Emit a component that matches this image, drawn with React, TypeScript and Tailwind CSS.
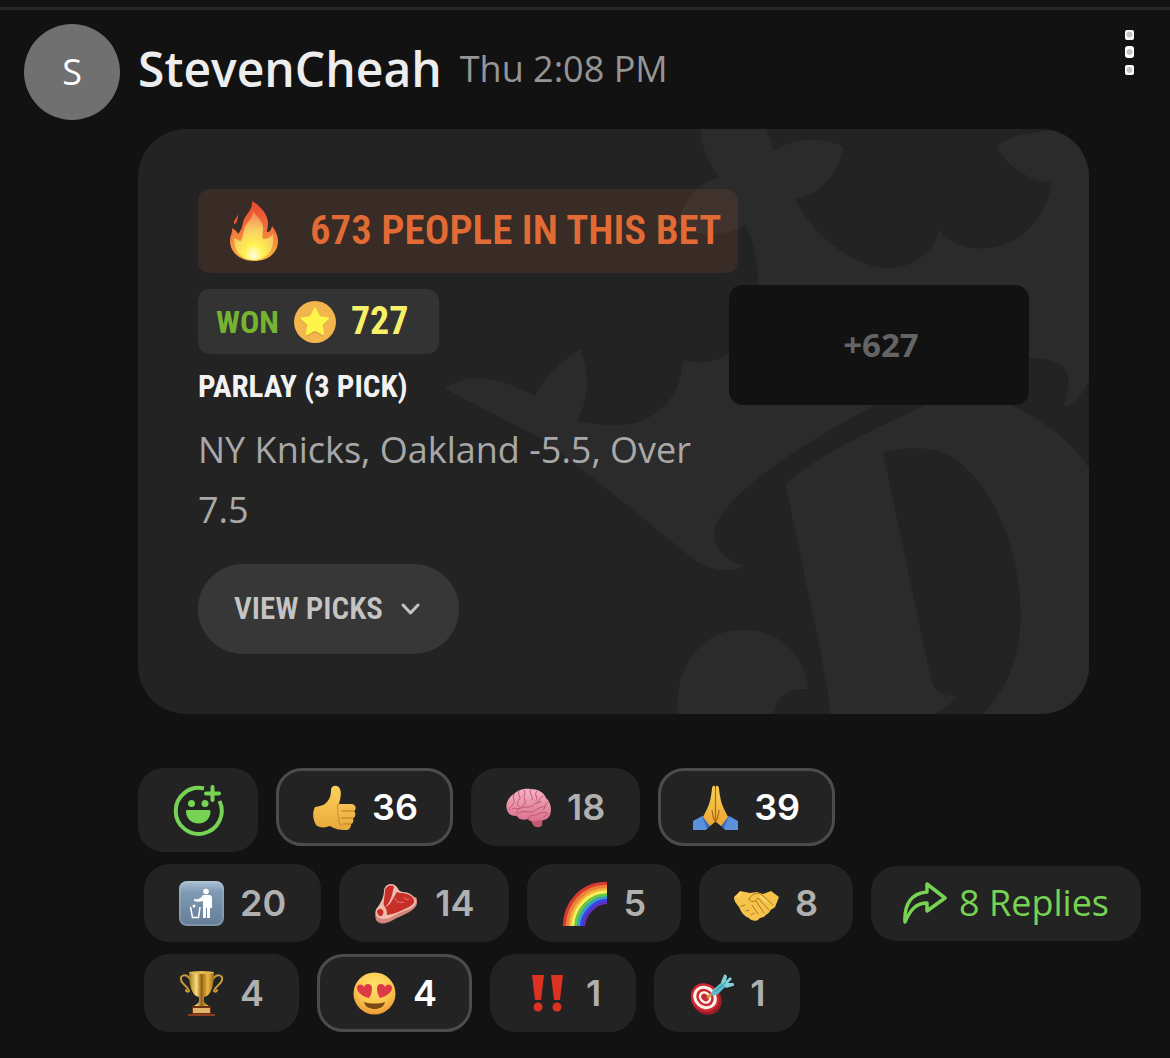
import type { ReactNode } from 'react'

interface Reaction {
  name: string
  icon: ReactNode
  count: number
  active?: boolean
}

const Flame = () => (
  <svg className="h-[60px] w-12 shrink-0" viewBox="0 0 48 60" aria-hidden="true">
    <defs>
      <linearGradient id="flame" x1="0" y1="0" x2="0" y2="1">
        <stop offset="0" stopColor="#e8482f" />
        <stop offset="0.45" stopColor="#f0703c" />
        <stop offset="0.75" stopColor="#f6973c" />
        <stop offset="1" stopColor="#f9b93f" />
      </linearGradient>
      <radialGradient id="flameCore" cx="0.5" cy="0.9" r="0.8">
        <stop offset="0" stopColor="#fffde0" />
        <stop offset="0.3" stopColor="#fff04f" />
        <stop offset="0.65" stopColor="#fbcf63" />
        <stop offset="1" stopColor="#f3985a" />
      </radialGradient>
    </defs>
    <path fill="url(#flame)" d="M22 0c9 5 16 14 16 22 0 4-1 7-1 9 3 0 4-2 5-6 4 5 6 10 6 15 0 12-10 20-24 20S0 51 0 40c0-6 3-9 2-13 3 2 5 3 6 6 3-3 4-7 5-11 1-8 10-12 9-22z" />
    <path fill="#e2573a" d="M8 13c-1 4-5 6-4 10 3 0 4-5 4-10z" />
    <path fill="url(#flameCore)" d="M23 11c6 6 11 12 10 18 0 3-1 6 0 9 4 0 8-2 10-5 2 14-5 26-19 26S4 49 4 37c3 1 5 3 7 3 2-4 2-9 4-14 2-5 8-9 8-15z" />
  </svg>
)

const Coin = () => (
  <svg className="size-[42px]" viewBox="0 0 42 42" aria-hidden="true">
    <circle cx="21" cy="21" r="21" fill="#f3b64d" />
    <path fill="#c98a2b" opacity="0.5" strokeLinejoin="round" d="M21 8l4.400 8.400 9.400 1.700-6.600 6.900 1.200 9.500-8.400-4-8.400 4 1.200-9.500-6.600-6.900 9.400-1.700z" transform="translate(0 1)" />
    <path fill="#fdf54a" stroke="#fdf54a" strokeWidth="2" strokeLinejoin="round" d="M21 7.500l4.200 8.500 9 1.400-6.500 6.500 1.400 9.100-8.100-4.300-8.100 4.300 1.400-9.100-6.500-6.500 9-1.400z" />
  </svg>
)

const ThumbsUp = () => (
  <svg className="size-[45px]" viewBox="0 0 45 45">
    <defs>
      <linearGradient id="hand" x1="0" y1="0" x2="0" y2="1">
        <stop offset="0" stopColor="#fcd15c" />
        <stop offset="1" stopColor="#e9a93c" />
      </linearGradient>
    </defs>
    <path fill="url(#hand)" d="M4 22c4-1 8-1 11-4 4-4 5-8 5-13 0-5 7-6 9-1 2 5 0 10-1 15h12c5 0 6 5 3 7 2 2 2 6-1 7 1 3 0 6-2 6 0 4-2 6-5 6-7 0-11-1-16-4-5 2-11 2-14-1-3-5-4-12-1-18z" />
    <g fill="none" stroke="#b97b26" strokeWidth="1.200" strokeLinecap="round">
      <path d="M42 26H31M41 33H31M39 39h-7" />
      <path d="M28 19c-2 2-2 4-1 7-1 3 0 5 1 7-1 3 0 5 2 8" opacity="0.6" />
    </g>
  </svg>
)

const Brain = () => (
  <svg className="size-[45px]" viewBox="0 0 45 45">
    <defs>
      <linearGradient id="brain" x1="0" y1="0" x2="0" y2="1">
        <stop offset="0" stopColor="#f5b3c3" />
        <stop offset="1" stopColor="#d9708c" />
      </linearGradient>
    </defs>
    <path fill="#c0596b" d="M24 33l3 7c2 3 8 3 9 0l1-8z" />
    <path fill="url(#brain)" d="M2 27C-2 21 2 12 8 9c4-5 12-6 17-5 8 0 13 4 15 9 5 4 6 12 4 17-2 5-8 6-12 5-5 3-9 1-10-1-5 2-10 0-11-3-4 0-8-1-9-4z" />
    <g fill="none" stroke="#bd5875" strokeWidth="1" strokeLinecap="round">
      <path d="M8 9c-2 5 2 6-1 10-1 3-4 3-4 6M13 6c-2 4 3 6 0 9-2 2-2 5 0 7M18 5c3 4-2 6 1 10 1 3 0 5-3 6M25 4c-3 5 3 6 1 11M31 6c-4 4 2 6-1 10M37 11c-4 1-3 6-6 8" />
      <path d="M11 31c-2-8 5-9 11-9 6 0 7-6 13-5M13 28c6-4 10 1 15-2 4-2 6-5 11-4M22 34c1-5 7-3 10-5 3-2 6-2 9-1M42 17c-4 2-2 6-5 8M6 24c3-3 5 2 8-1M38 32c1-2 3-2 4-3" />
    </g>
  </svg>
)

const Pray = () => (
  <svg className="size-[45px]" viewBox="0 0 45 45">
    <defs>
      <linearGradient id="palm" x1="0" y1="0" x2="0" y2="1">
        <stop offset="0" stopColor="#f7cf55" />
        <stop offset="1" stopColor="#eea72f" />
      </linearGradient>
    </defs>
    <path fill="#5a90dc" d="M0 36l9-5 8 9-4 5H0zM45 36l-9-5-8 9 4 5h13z" />
    <path fill="#3b6ebb" d="M9 31l3 1 6 8-4 4zM36 31l-3 1-6 8 4 4z" />
    <path fill="url(#palm)" d="M22 1c-2-1-3 1-3 3-1 8-2 14-5 20l-4 8 7 9 5-4z" />
    <path fill="url(#palm)" d="M23 1c2-1 3 1 3 3 1 8 2 14 5 20l4 8-7 9-5-4z" />
    <path fill="none" stroke="#a86919" strokeWidth="1.200" d="M22.500 2v35M19 25c1 5 1 9 3 11M26 25c-1 5-1 9-3 11" />
  </svg>
)

const Litter = () => (
  <svg className="size-[45px]" viewBox="0 0 45 45">
    <defs>
      <linearGradient id="sign" x1="0" y1="0" x2="0" y2="1">
        <stop offset="0" stopColor="#aac0d4" />
        <stop offset="0.25" stopColor="#7f9ab3" />
        <stop offset="1" stopColor="#647d97" />
      </linearGradient>
    </defs>
    <rect width="45" height="45" rx="8" fill="url(#sign)" />
    <rect x="1" y="1" width="43" height="43" rx="7" fill="none" stroke="#c2d2df" strokeOpacity="0.25" strokeWidth="2" />
    <g fill="#fff">
      <circle cx="27" cy="10.500" r="2.800" />
      <path d="M24 14h6c2 0 3 1 3 3v10h-2v10h-3V27h-1v10h-3V20c-3 1-6 1-9 0v-2c4 1 6 0 9-4z" />
      <circle cx="15" cy="25" r="1.500" />
    </g>
    <path fill="none" stroke="#fff" strokeWidth="1.500" d="M11.500 26l2 10.500h6l1.500-10.500" />
  </svg>
)

const Steak = () => (
  <svg className="size-[45px]" viewBox="0 0 45 45">
    <path fill="#d3877a" d="M2 28c-1 4-1 8 0 11 3 5 10 4 17 0 9-5 18-7 23-14 2-3 1-7 0-9z" />
    <path fill="#eebcae" d="M10 9c1-6 8-8 12-4 2 2 3 6 7 6 6 0 12 4 13 9 0 5-5 8-12 10-9 3-14 9-22 8-6-1-8-6-5-11 3-4 7-10 7-18z" />
    <path fill="#c82f28" d="M11 9c1-4 7-6 9-3-2 6-2 14-9 20-3-2 0-9 0-17z" />
    <path fill="#c82f28" d="M23 11c4 2 9 0 14 4 5 4 4 8-2 11-8 4-15 7-22 8 0-5-1-6-2-8 6-2 8-9 12-15z" />
    <path fill="#c82f28" d="M3 30c3-4 8-1 6 3-1 4-6 2-6-3z" />
    <path fill="none" stroke="#e57d72" strokeWidth="1" d="M21 17c0 4 5 5 9 4M31 16c-1 2 1 3 4 2" />
  </svg>
)

const Rainbow = () => (
  <svg className="size-[45px]" viewBox="0 0 45 45">
    <g fill="none" strokeWidth="3.400">
      <path stroke="#d83a32" d="M2.500 45C3 22 19 2.500 45 2.500" />
      <path stroke="#ef8136" d="M5.500 45C6 24 21 5.500 45 5.500" />
      <path stroke="#f5b13e" d="M8.500 45C9 26 23 8.500 45 8.500" />
      <path stroke="#f7ee5c" d="M11 45C11.500 28 25 11 45 11" />
      <path stroke="#63c748" d="M14 45C14.500 30 27 14 45 14" />
      <path stroke="#3b9fd0" d="M17 45C17.500 32 29 17 45 17" />
      <path stroke="#3d43e0" d="M19.500 45C20 34 31 19.500 45 19.500" />
      <path stroke="#6b2bbd" strokeWidth="2" d="M22 45C22.500 36 32 22 45 22" />
    </g>
  </svg>
)

const Handshake = () => (
  <svg className="size-[45px]" viewBox="0 0 45 45">
    <path fill="#f6c44b" d="M0 16L6 10l10 2 7-1 6 2 8-3 8 6-4 10c-2 2-4 2-5 4-1 3-4 3-5 5-2 2-5 1-6 3-2 3-8 2-10-1-5-2-8-6-10-11-2-3-5-5-5-10z" />
    <g fill="none" stroke="#b0761f" strokeWidth="1" strokeLinecap="round">
      <path d="M15 18c2-4 7-7 12-5l12 11M15 18c1 4 7 3 9-1l11 12M22 20l8 12M18 24l6 9" />
      <path d="M7 25l4-1M12 30l3-1M17 34l3-2" />
    </g>
    <path fill="none" stroke="#fde07a" strokeWidth="1.500" d="M3 16l4-4M26 15l7 6" />
  </svg>
)

const Trophy = () => (
  <svg className="size-[45px]" viewBox="0 0 45 45">
    <defs>
      <linearGradient id="cup">
        <stop offset="0" stopColor="#a7751c" />
        <stop offset="0.3" stopColor="#f8dc79" />
        <stop offset="0.5" stopColor="#936015" />
        <stop offset="0.75" stopColor="#e9ba43" />
        <stop offset="1" stopColor="#9b691b" />
      </linearGradient>
    </defs>
    <g fill="none" stroke="#c99b3b" strokeWidth="2" strokeLinecap="round">
      <path d="M11 8C7 2 1 4 2 9c1 5 7 6 8 11-1 1-3 1-3-1" />
      <path d="M34 8c4-6 10-4 9 1-1 5-7 6-8 11 1 1 3 1 3-1" />
    </g>
    <path fill="url(#cup)" d="M10 1h25c0 14-3 24-10 25v4c0 3 5 4 6 6H14c1-2 6-3 6-6v-4C13 25 10 15 10 1z" />
    <ellipse cx="22.500" cy="1.500" rx="12.500" ry="1.500" fill="#e5bb50" />
    <path fill="#6e3015" d="M13 35h19v8H13z" />
    <path fill="#8a3f20" d="M9 43h27v2H9z" />
    <path fill="#e2b56b" d="M14 37h17v5H14z" />
  </svg>
)

const HeartEyes = () => (
  <svg className="size-[45px]" viewBox="0 0 45 45">
    <defs>
      <radialGradient id="face" cx="0.5" cy="0.3" r="0.7">
        <stop offset="0" stopColor="#fee16b" />
        <stop offset="0.6" stopColor="#fbc84f" />
        <stop offset="1" stopColor="#ec9a36" />
      </radialGradient>
    </defs>
    <circle cx="22.500" cy="22.500" r="21" fill="url(#face)" />
    <path fill="#dd3946" d="M17 27C12 26 5 22 5 17c0-4 5-5 7-1 2-5 8-3 8 1 0 4-1 7-3 10z" />
    <path fill="#dd3946" d="M28 27c5-1 12-5 12-10 0-4-5-5-7-1-2-5-8-3-8 1 0 4 1 7 3 10z" />
    <path fill="#7a4a12" d="M12 31c6 2 15 2 21 0-1 5-6 7-10 7-5 0-10-2-11-7z" />
  </svg>
)

const DoubleBang = () => (
  <svg className="size-[45px]" viewBox="0 0 45 45">
    <g fill="#dc3222">
      <path d="M7 4h12l-3 25h-6zM26 4h12l-3 25h-6z" />
      <circle cx="13" cy="36" r="4.500" />
      <circle cx="32" cy="36" r="4.500" />
    </g>
  </svg>
)

const Dart = () => (
  <svg className="size-[45px]" viewBox="0 0 45 45">
    <ellipse cx="17.500" cy="28.500" rx="14.500" ry="16" fill="#9f1c27" transform="rotate(-45 17.500 28.500)" />
    <g transform="rotate(-45 16 26.500)" fill="none">
      <ellipse cx="16" cy="26.500" rx="13.500" ry="15" fill="#cb2a33" />
      <ellipse cx="16" cy="26.500" rx="9.500" ry="11" stroke="#fff4ea" strokeWidth="3" />
      <ellipse cx="16" cy="26.500" rx="4.500" ry="5.500" stroke="#fff4ea" strokeWidth="2.500" />
    </g>
    <path stroke="#c59a3a" strokeWidth="2.500" d="M18 27l6-5" />
    <path fill="#5fbccb" d="M23 24c-1-3 0-5 3-7l7-6 4 4-7 7c-2 2-4 3-7 2z" />
    <path fill="#7fd0d8" d="M32 11l3-7c1-1 3 0 3 2l-1 4 4-4 2 2-4 4 5 0c2 1 1 3 0 3l-7 2z" />
    <path stroke="#2f8593" strokeWidth="1" d="M26 21l11-10" />
  </svg>
)

const AddReaction = () => (
  <svg className="size-[51px]" viewBox="0 0 51 51" fill="none" stroke="#77d353" strokeWidth="4" strokeLinecap="round" aria-hidden="true">
    <path d="M31 3.500A23 23 0 1 0 46.500 16" strokeLinecap="butt" />
    <path d="M39.500 2v13M33 8.500h13" strokeWidth="4" />
    <circle cx="18.500" cy="18.500" r="3.500" fill="#77d353" stroke="none" />
    <circle cx="32" cy="18.500" r="3.500" fill="#77d353" stroke="none" />
    <path d="M14.500 25h21c1.500 0 2 .5 2 2-.5 7-5.500 11.500-12 11.500s-12-4.500-12.500-11.500c0-1.500 0-2 1.500-2z" fill="#77d353" stroke="none" />
  </svg>
)

// Faded crown logo behind the bet card
const Watermark = () => (
  <svg className="pointer-events-none absolute top-0 right-0 h-[585px] w-[659px]" viewBox="0 0 659 585" aria-hidden="true">
    <g transform="matrix(.4273 0 0 .3827 0 -9)" fill="#2b2b2b">
      <path d="M632 20C635 70 650 110 678 150C625 165 595 205 580 268C625 312 690 308 738 272C760 330 768 370 768 430C765 520 740 580 700 610C670 635 625 637 592 628C590 720 530 800 430 798C390 796 365 792 345 785C375 720 372 660 352 598C300 635 265 680 245 722C180 680 90 650 35 703L265 835L345 905C440 985 540 1080 620 1150C660 1185 735 1180 735 1162C690 1155 665 1110 664 1087C664 1000 830 870 1043 745C1200 660 1320 615 1402 622C1470 625 1495 640 1495 690C1493 720 1482 735 1486 748C1510 745 1538 700 1545 670V20C1460 25 1370 30 1325 68C1350 120 1400 160 1455 163C1445 240 1390 335 1290 336C1240 336 1205 310 1190 288C1185 340 1130 388 1070 388C990 380 900 310 855 207C910 195 960 140 967 70C910 40 850 50 803 80C800 60 795 40 785 20z" />
      <path d="M832 952C900 880 1020 820 1160 745C1260 715 1320 725 1370 750C1450 795 1510 850 1545 915V1556H1290C1350 1490 1384 1400 1382 1290C1380 1150 1340 990 1240 895C1190 850 1130 852 1060 868L1172 1460C1180 1490 1195 1507 1235 1505C1220 1525 1200 1540 1175 1556H938C930 1480 915 1400 905 1340z" />
      <path d="M580 1556C570 1420 640 1332 733 1332C820 1332 878 1400 885 1487C830 1485 805 1515 805 1556z" />
    </g>
  </svg>
)

const topReactions: Reaction[] = [
  { name: 'Thumbs up', icon: <ThumbsUp />, count: 36, active: true },
  { name: 'Brain', icon: <Brain />, count: 18 },
  { name: 'Pray', icon: <Pray />, count: 39, active: true },
]

const middleReactions: Reaction[] = [
  { name: 'Litter in bin', icon: <Litter />, count: 20 },
  { name: 'Steak', icon: <Steak />, count: 14 },
  { name: 'Rainbow', icon: <Rainbow />, count: 5 },
  { name: 'Handshake', icon: <Handshake />, count: 8 },
]

const bottomReactions: Reaction[] = [
  { name: 'Trophy', icon: <Trophy />, count: 4 },
  { name: 'Heart eyes', icon: <HeartEyes />, count: 4, active: true },
  { name: 'Double exclamation', icon: <DoubleBang />, count: 1 },
  { name: 'Bullseye', icon: <Dart />, count: 1 },
]

function ReactionButton({ reaction }: { reaction: Reaction }) {
  return (
    <button
      type="button"
      aria-label={`${reaction.name} ${reaction.count}`}
      className={`flex h-[78px] items-center gap-4 rounded-[26px] border-3 bg-[#232323] px-8 font-['Inter',sans-serif] text-[36px] font-semibold ${
        reaction.active ? 'border-[#4c4c4c] text-white' : 'border-[#232323] text-[#b0b0b0]'
      }`}
    >
      {reaction.icon}
      <span>{reaction.count}</span>
    </button>
  )
}

export default function App() {
  return (
    <div className="min-h-screen bg-[#121212] pt-[7px] font-['Open_Sans',sans-serif]">
      <article className="border-t-3 border-[#272727] pt-3.5">
        {/* Header */}
        <header className="flex items-start pr-9 pl-6">
          <div className="flex size-24 items-center justify-center rounded-full bg-[#707070] text-[36px] text-white">S</div>
          <div className="ml-[18px] flex h-[90px] items-center gap-[18px]">
            <h1 className="text-[48px] font-semibold text-[#ededed]">StevenCheah</h1>
            <time className="text-[36px] text-[#959595]">Thu 2:08 PM</time>
          </div>
          <button type="button" aria-label="More options" className="mt-1.5 ml-auto">
            <svg className="h-[45px] w-[9px]" viewBox="0 0 9 45">
              <g fill="#fff">
                <rect width="9" height="10" rx="2" />
                <rect y="16" width="9" height="12" rx="3" />
                <rect y="35" width="9" height="10" rx="2" />
              </g>
              <g fill="#c4c4c4">
                <circle cx="4.500" cy="4.500" r="3" />
                <circle cx="4.500" cy="22" r="3" />
                <circle cx="4.500" cy="40" r="3" />
              </g>
            </svg>
          </button>
        </header>

        {/* Bet card */}
        <section className="relative mt-[9px] mr-[81px] ml-[138px] overflow-hidden rounded-[48px] bg-[#232323] p-[60px]">
          <Watermark />
          <div className="relative">
            <div className="flex h-[84px] w-[540px] items-center gap-8 rounded-xl bg-[#e96b35]/11 pl-8">
              <Flame />
              <span className="font-['Roboto_Condensed','Liberation_Sans_Narrow',sans-serif] text-[41px] font-semibold whitespace-nowrap text-[#e26b35]">
                673 PEOPLE IN THIS BET
              </span>
            </div>
            <div className="mt-3 flex items-start">
              <div className="min-w-0 flex-1 pt-1">
                <div className="flex h-[65px] w-[241px] items-center gap-[15px] rounded-xl bg-[#333333] pl-[18px] font-['Roboto_Condensed','Liberation_Sans_Narrow',sans-serif] font-bold">
                  <span className="text-[32px] text-[#76b331]">WON</span>
                  <Coin />
                  <span className="text-[38px] text-[#f9f06a]">727</span>
                </div>
                <h2 className="font-['Roboto_Condensed','Liberation_Sans_Narrow',sans-serif] text-[31px] leading-[66px] font-bold text-[#f2f2f2]">
                  PARLAY (3 PICK)
                </h2>
                <p className="text-[36px] leading-[60px] text-[#a8a8a8]">NY Knicks, Oakland -5.5, Over 7.5</p>
              </div>
              <div className="flex h-[120px] w-[300px] items-center justify-center rounded-[14px] bg-[#121212] pl-1 text-[33px] font-bold text-[#646464]">
                +627
              </div>
            </div>
            <button
              type="button"
              className="mt-6 flex h-[90px] w-[261px] items-center gap-[18px] rounded-full bg-[#373737] pl-9 font-['Roboto_Condensed','Liberation_Sans_Narrow',sans-serif] text-[31px] font-semibold text-[#c4c4c4]"
            >
              VIEW PICKS
              <svg className="h-3 w-[19px]" viewBox="0 0 19 12" fill="none" stroke="currentColor" strokeWidth="3" strokeLinecap="round" strokeLinejoin="round" aria-hidden="true">
                <path d="M2 2l7.500 8L17 2" />
              </svg>
            </button>
          </div>
        </section>

        {/* Reactions */}
        <div className="mt-[54px] flex items-start gap-[18px] pl-[138px]">
          <button type="button" aria-label="Add reaction" className="flex h-[84px] w-[120px] items-center justify-center rounded-[26px] bg-[#232323]">
            <AddReaction />
          </button>
          {topReactions.map((reaction) => (
            <ReactionButton key={reaction.name} reaction={reaction} />
          ))}
        </div>
        <div className="mt-3 flex items-center gap-[18px] pl-36">
          {middleReactions.map((reaction) => (
            <ReactionButton key={reaction.name} reaction={reaction} />
          ))}
          <a href="#replies" className="flex h-[75px] items-center gap-3 rounded-[26px] bg-[#232323] px-8 text-[36px] whitespace-nowrap text-[#77d353]">
            <svg className="h-[42px] w-11" viewBox="0 0 44 42" fill="none" stroke="currentColor" strokeWidth="3.500" strokeLinejoin="round" aria-hidden="true">
              <path d="M2 40C1 23 8 11 24 10V2l18 14-18 13v-8C12 21 7 29 2 40z" />
            </svg>
            8 Replies
          </a>
        </div>
        <div className="mt-3 flex gap-[18px] pl-36">
          {bottomReactions.map((reaction) => (
            <ReactionButton key={reaction.name} reaction={reaction} />
          ))}
        </div>
      </article>
    </div>
  )
}
